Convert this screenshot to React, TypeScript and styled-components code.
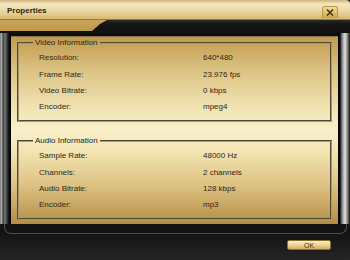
import React from 'react'
import styled, { createGlobalStyle } from 'styled-components'

const GlobalStyle = createGlobalStyle`
    html, body {
        margin: 0;
        padding: 0;
        background: #111;
    }
    body {
        font-family: 'Liberation Sans', Arial, sans-serif;
    }
`

const Window = styled.div`
    width: 350px;
    height: 260px;
    display: flex;
    flex-direction: column;
    background: #141414;
    overflow: hidden;
`

const TitleBar = styled.div`
    height: 19px;
    flex: none;
    display: flex;
    align-items: center;
    justify-content: space-between;
    padding: 0 12px 0 7px;
    border-bottom: 1px solid #9a7a3a;
    border-top-right-radius: 4px;
    background: linear-gradient(
        180deg,
        #cdb47e 0%,
        #f3e6bf 20%,
        #ecdaa6 55%,
        #d7b96f 100%
    );
`

const Title = styled.span`
    font-size: 8px;
    font-weight: bold;
    color: #2a2212;
    margin-top: 1px;
`

const CloseButton = styled.button`
    width: 16px;
    height: 12px;
    margin-top: 4px;
    padding: 0;
    display: flex;
    align-items: center;
    justify-content: center;
    border: 1px solid #b89a52;
    border-bottom: none;
    border-radius: 3px 3px 0 0;
    background: linear-gradient(180deg, #f2dc92 0%, #dcbb63 60%, #c9a248 100%);
`

const Ribbon = styled.div`
    height: 13px;
    flex: none;
    background: linear-gradient(180deg, #2a2a2a 0%, #151515 30%, #111 100%);
`

const Tab = styled.div`
    width: 107px;
    height: 11px;
    background: linear-gradient(180deg, #c9a55a 0%, #bf9a4b 100%);
    clip-path: polygon(0 0, 107px 0, 100px 4px, 92px 11px, 0 11px);
`

const Frame = styled.div`
    flex: none;
    display: flex;
    flex-direction: column;
`

const FrameRow = styled.div`
    height: 191px;
    display: flex;
`

const LeftRail = styled.div`
    width: 11px;
    flex: none;
    background: linear-gradient(
        90deg,
        #5a5a5a 0px,
        #b9b9b9 1px,
        #9a9a9a 2px,
        #3a3a3a 3px,
        #777 5px,
        #3c3c3c 7px,
        #0c0c0c 9px,
        #000 11px
    );
`

const RightRail = styled.div`
    width: 12px;
    flex: none;
    background: linear-gradient(
        90deg,
        #000 0px,
        #0c0c0c 2px,
        #4a4a4a 3px,
        #a8a8a8 5px,
        #dedede 7px,
        #9a9a9a 9px,
        #3a3a3a 11px,
        #151515 12px
    );
`

const PanelSlot = styled.div`
    flex: 1;
    display: flex;
    padding-top: 3px;
    background: #0e0e0e;
`

const Panel = styled.div`
    flex: 1;
    display: flex;
    flex-direction: column;
    gap: 14px;
    padding: 1px 6px 4px;
    border-top: 1px solid #8a7748;
    background: linear-gradient(
        180deg,
        #c19b4e 0%,
        #dcc383 18%,
        #f1e3b2 38%,
        #f9f0ca 50%,
        #f2e3b0 62%,
        #dcc080 80%,
        #b38e44 100%
    );
`

const FrameBase = styled.div`
    height: 9px;
    margin: 0 3px 0 4px;
    border: 1px solid #4e4e4e;
    border-top: none;
    border-radius: 0 0 7px 7px;
    background: #131313;
`

const Group = styled.fieldset`
    margin: 0;
    padding: 0;
    height: 84px;
    box-sizing: border-box;
    border: 2px groove #a39779;
    min-width: 0;
`

const Legend = styled.legend`
    margin-left: 14px;
    padding: 0 2px;
    font-size: 8px;
    line-height: 10px;
    color: #2a2416;
`

const Rows = styled.div`
    display: grid;
    grid-template-columns: 164px 1fr;
    grid-auto-rows: 16.4px;
    align-items: center;
    padding: 2px 0 0 20px;
`

const Cell = styled.span<{ $value?: boolean }>`
    font-size: 8px;
    line-height: 10px;
    color: ${(p) => (p.$value ? '#2b2619' : '#2e2818')};
    white-space: nowrap;
`

const Footer = styled.div`
    flex: 1;
    display: flex;
    justify-content: flex-end;
    align-items: flex-start;
    padding: 6px 19px 0 0;
    background: linear-gradient(180deg, #141414 0%, #1e1e1e 60%, #262626 100%);
`

const OkButton = styled.button`
    width: 44px;
    height: 10px;
    padding: 0;
    display: flex;
    align-items: center;
    justify-content: center;
    font-family: 'Liberation Sans', Arial, sans-serif;
    font-size: 7px;
    color: #3a3222;
    border: 1px solid #8c6f30;
    border-radius: 2px;
    background: linear-gradient(180deg, #fbf0c8 0%, #ecd594 50%, #d4b060 100%);
`

type Row = [string, string]

const video: Row[] = [
    ['Resolution:', '640*480'],
    ['Frame Rate:', '23.976 fps'],
    ['Video Bitrate:', '0 kbps'],
    ['Encoder:', 'mpeg4'],
]

const audio: Row[] = [
    ['Sample Rate:', '48000 Hz'],
    ['Channels:', '2 channels'],
    ['Audio Bitrate:', '128 kbps'],
    ['Encoder:', 'mp3'],
]

const InfoGroup: React.FC<{ title: string; rows: Row[] }> = ({ title, rows }) => (
    <Group>
        <Legend>{title}</Legend>
        <Rows>
            {rows.map(([label, value]) => (
                <React.Fragment key={label}>
                    <Cell>{label}</Cell>
                    <Cell $value>{value}</Cell>
                </React.Fragment>
            ))}
        </Rows>
    </Group>
)

export default function App() {
    return (
        <>
            <GlobalStyle />
            <Window>
                <TitleBar>
                    <Title>Properties</Title>
                    <CloseButton aria-label="close">
                        <svg width="8" height="7" viewBox="0 0 8 7">
                            <path
                                d="M1 0.5 L7 6.5 M7 0.5 L1 6.5"
                                stroke="#3a2c10"
                                strokeWidth="1.4"
                            />
                        </svg>
                    </CloseButton>
                </TitleBar>
                <Ribbon>
                    <Tab />
                </Ribbon>
                <Frame>
                    <FrameRow>
                        <LeftRail />
                        <PanelSlot>
                            <Panel>
                                <InfoGroup title="Video Information" rows={video} />
                                <InfoGroup title="Audio Information" rows={audio} />
                            </Panel>
                        </PanelSlot>
                        <RightRail />
                    </FrameRow>
                    <FrameBase />
                </Frame>
                <Footer>
                    <OkButton>OK</OkButton>
                </Footer>
            </Window>
        </>
    )
}
